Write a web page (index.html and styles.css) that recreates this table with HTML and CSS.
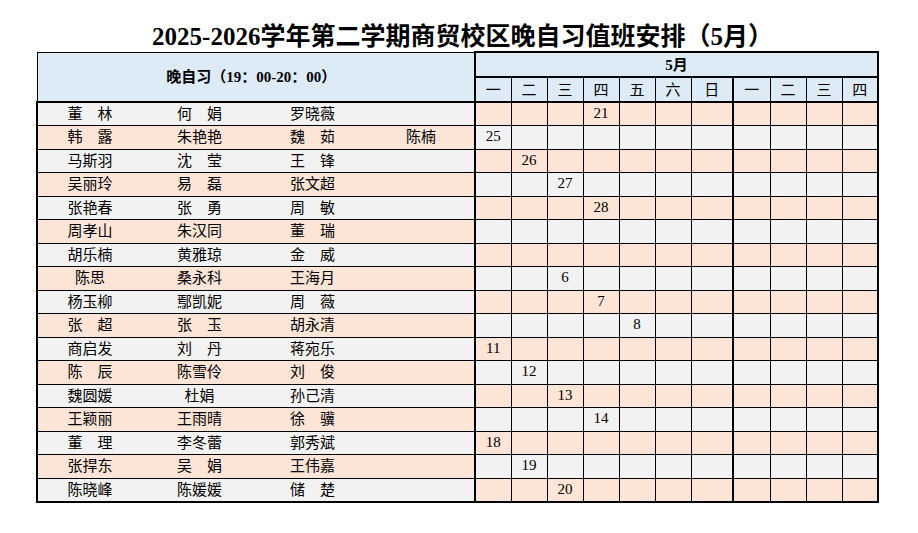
FILE: index.html
```html
<!DOCTYPE html>
<html lang="zh-CN">
<head>
<meta charset="utf-8">
<title>晚自习值班安排</title>
<link rel="stylesheet" href="styles.css">
</head>
<body>
<div class="title">2025-2026学年第二学期商贸校区晚自习值班安排（5月）</div>
<table class="sheet">
<colgroup>
<col class="c1"><col class="c2"><col class="c3"><col class="c4">
<col class="cd"><col class="cd"><col class="cd"><col class="cd"><col class="cd"><col class="cd"><col class="csun">
<col class="c8"><col class="cd"><col class="cd"><col class="cd">
</colgroup>
<thead>
<tr class="h1"><td class="hl" colspan="4" rowspan="2">晚自习（19：00-20：00）</td><td class="mo" colspan="11">5月</td></tr>
<tr class="h2"><td>一</td><td>二</td><td>三</td><td>四</td><td>五</td><td>六</td><td>日</td><td>一</td><td>二</td><td>三</td><td>四</td></tr>
</thead>
<tbody>
<tr class="odd"><td>董　林</td><td>何　娟</td><td>罗晓薇</td><td></td><td></td><td></td><td></td><td>21</td><td></td><td></td><td></td><td></td><td></td><td></td><td></td></tr>
<tr class="even"><td>韩　露</td><td>朱艳艳</td><td>魏　茹</td><td>陈楠</td><td>25</td><td></td><td></td><td></td><td></td><td></td><td></td><td></td><td></td><td></td><td></td></tr>
<tr class="odd"><td>马斯羽</td><td>沈　莹</td><td>王　锋</td><td></td><td></td><td>26</td><td></td><td></td><td></td><td></td><td></td><td></td><td></td><td></td><td></td></tr>
<tr class="even"><td>吴丽玲</td><td>易　磊</td><td>张文超</td><td></td><td></td><td></td><td>27</td><td></td><td></td><td></td><td></td><td></td><td></td><td></td><td></td></tr>
<tr class="odd"><td>张艳春</td><td>张　勇</td><td>周　敏</td><td></td><td></td><td></td><td></td><td>28</td><td></td><td></td><td></td><td></td><td></td><td></td><td></td></tr>
<tr class="even"><td>周孝山</td><td>朱汉同</td><td>董　瑞</td><td></td><td></td><td></td><td></td><td></td><td></td><td></td><td></td><td></td><td></td><td></td><td></td></tr>
<tr class="odd"><td>胡乐楠</td><td>黄雅琼</td><td>金　威</td><td></td><td></td><td></td><td></td><td></td><td></td><td></td><td></td><td></td><td></td><td></td><td></td></tr>
<tr class="even"><td>陈思</td><td>桑永科</td><td>王海月</td><td></td><td></td><td></td><td>6</td><td></td><td></td><td></td><td></td><td></td><td></td><td></td><td></td></tr>
<tr class="odd"><td>杨玉柳</td><td>鄢凯妮</td><td>周　薇</td><td></td><td></td><td></td><td></td><td>7</td><td></td><td></td><td></td><td></td><td></td><td></td><td></td></tr>
<tr class="even"><td>张　超</td><td>张　玉</td><td>胡永清</td><td></td><td></td><td></td><td></td><td></td><td>8</td><td></td><td></td><td></td><td></td><td></td><td></td></tr>
<tr class="odd"><td>商启发</td><td>刘　丹</td><td>蒋宛乐</td><td></td><td>11</td><td></td><td></td><td></td><td></td><td></td><td></td><td></td><td></td><td></td><td></td></tr>
<tr class="even"><td>陈　辰</td><td>陈雪伶</td><td>刘　俊</td><td></td><td></td><td>12</td><td></td><td></td><td></td><td></td><td></td><td></td><td></td><td></td><td></td></tr>
<tr class="odd"><td>魏圆媛</td><td>杜娟</td><td>孙己清</td><td></td><td></td><td></td><td>13</td><td></td><td></td><td></td><td></td><td></td><td></td><td></td><td></td></tr>
<tr class="even"><td>王颖丽</td><td>王雨晴</td><td>徐　骥</td><td></td><td></td><td></td><td></td><td>14</td><td></td><td></td><td></td><td></td><td></td><td></td><td></td></tr>
<tr class="odd"><td>董　理</td><td>李冬蕾</td><td>郭秀斌</td><td></td><td>18</td><td></td><td></td><td></td><td></td><td></td><td></td><td></td><td></td><td></td><td></td></tr>
<tr class="even"><td>张捍东</td><td>吴　娟</td><td>王伟嘉</td><td></td><td></td><td>19</td><td></td><td></td><td></td><td></td><td></td><td></td><td></td><td></td><td></td></tr>
<tr class="odd"><td>陈晓峰</td><td>陈媛媛</td><td>储　楚</td><td></td><td></td><td></td><td>20</td><td></td><td></td><td></td><td></td><td></td><td></td><td></td><td></td></tr>
</tbody>
</table>
</body>
</html>
```

FILE: styles.css
```css
html, body {
  margin: 0;
  padding: 0;
  background: #ffffff;
}

body {
  font-family: "Liberation Serif", "Noto Sans CJK SC", serif;
  color: #000;
}

.title {
  height: 29px;
  padding-top: 22px;
  padding-left: 7px;
  line-height: 29px;
  text-align: center;
  font-size: 25px;
  font-weight: bold;
  white-space: nowrap;
}

.sheet {
  margin-left: 36px;
  width: 842px;
  border-collapse: collapse;
  table-layout: fixed;
  font-size: 15px;
}

.c1 { width: 105px; }
.c2 { width: 115px; }
.c3 { width: 111px; }
.c4 { width: 107px; }
.cd { width: 36px; }
.csun { width: 42px; }
.c8 { width: 37px; }

.sheet td {
  padding: 0;
  border: 1px solid #000;
  text-align: center;
  vertical-align: middle;
  line-height: 16px;
  white-space: nowrap;
  overflow: hidden;
}

/* header */
.h1, .h2 {
  height: 25px;
}

.h1 td, .h2 td {
  background: #ddebf7;
}

.hl {
  font-weight: bold;
  padding-right: 9px !important;
  border-top: 1px solid #000;
  border-left: 1px solid #000;
  border-bottom: 2px solid #000 !important;
  border-right: 2px solid #000 !important;
}

.mo {
  font-weight: bold;
  border: 2px solid #000 !important;
}

.h2 td {
  border-bottom: 2px solid #000;
}

.h2 td:nth-child(7) {
  border-right: 2px solid #000;
}

.h2 td:nth-child(11) {
  border-right: 2px solid #000;
}

/* body rows */
tbody tr {
  height: 23.5px;
}

tbody td:nth-child(-n+4) {
  border-left: none;
  border-right: none;
}

tbody td:nth-child(n+5) {
  padding-bottom: 2px;
}

tbody td:nth-child(1) {
  border-left: 2px solid #000;
}

tbody td:nth-child(5) {
  border-left: 2px solid #000;
}

tbody td:nth-child(11) {
  border-right: 2px solid #000;
}

tbody td:nth-child(15) {
  border-right: 2px solid #000;
}

tbody tr:last-child td {
  border-bottom: 2px solid #000;
}

.odd td:nth-child(-n+4) { background: #f2f2f2; }
.odd td:nth-child(n+5) { background: #fce4d6; }
.even td:nth-child(-n+4) { background: #fce4d6; }
.even td:nth-child(n+5) { background: #f2f2f2; }
```
